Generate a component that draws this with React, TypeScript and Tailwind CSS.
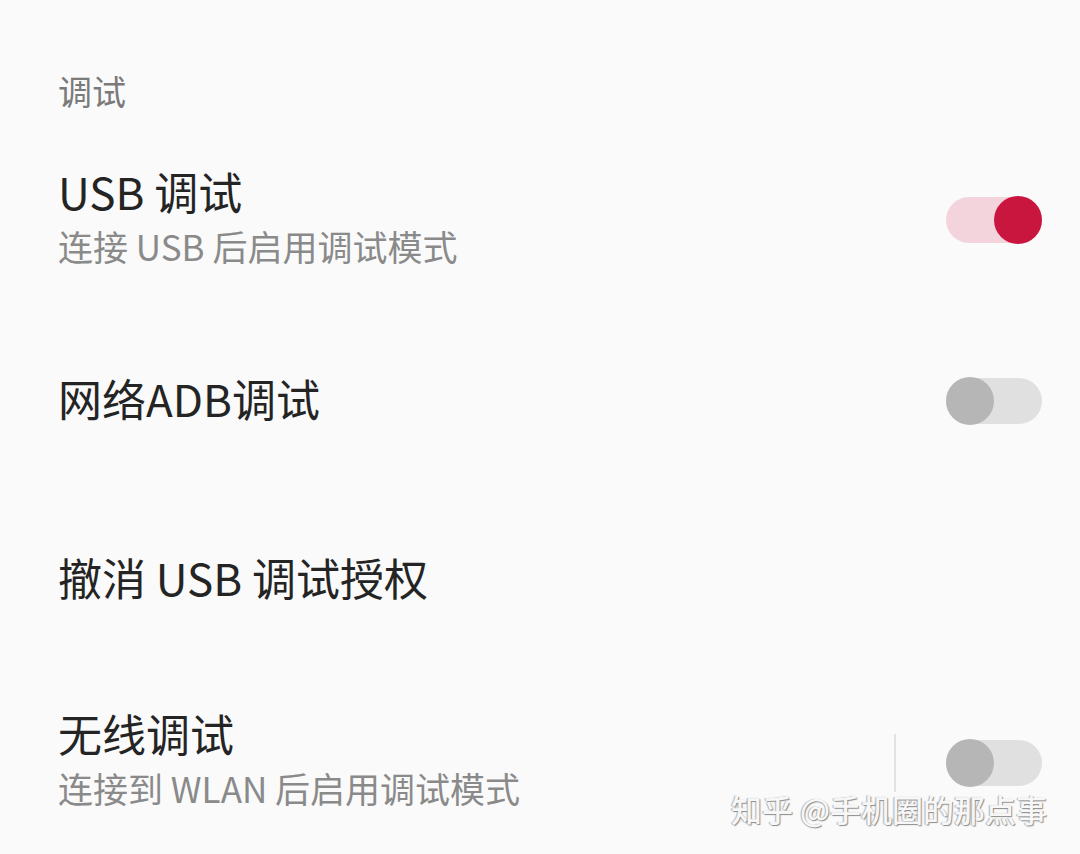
import React from 'react';

interface IToggleProps {
  checked: boolean;
}

const Toggle = ({ checked }: IToggleProps) => (
  <div
    className={`relative flex h-[46px] w-[96px] shrink-0 items-center rounded-full ${
      checked ? 'justify-end bg-[#f3d4dc]' : 'justify-start bg-[#e0e0e0]'
    }`}
  >
    <div
      className={`h-[48px] w-[48px] rounded-full ${checked ? 'bg-[#c9163f]' : 'bg-[#b6b6b6]'}`}
    />
  </div>
);

interface IRowProps {
  title: string;
  summary?: string;
  checked?: boolean;
  divider?: boolean;
  className: string;
}

const Row = ({ title, summary, checked, divider, className }: IRowProps) => (
  <div className={`flex items-center justify-between ${className}`}>
    <div className="flex flex-col">
      <span className="text-[44px] leading-[52px] text-[#242424]">{title}</span>
      {summary && (
        <span className="mt-[5px] text-[35px] leading-[48px] text-[#8a8a8a]">{summary}</span>
      )}
    </div>

    {checked !== undefined && (
      <div className="mt-[6px] flex items-center gap-[50px]">
        {divider && <div className="h-[58px] w-[2px] bg-[#e2e2e2]" />}
        <Toggle checked={checked} />
      </div>
    )}
  </div>
);

export default function App() {
  return (
    <div
      className="relative h-[854px] w-[1080px] overflow-hidden bg-[#fafafa] pl-[58px] pr-[38px]"
      style={{ fontFamily: '"Noto Sans CJK SC", "Noto Sans", sans-serif' }}
    >
      <div className="h-[117px] pt-[69px] text-[34px] leading-[44px] text-[#7a7a7a]">调试</div>

      <Row className="h-[200px]" title="USB 调试" summary="连接 USB 后启用调试模式" checked />
      <Row className="h-[162px]" title="网络ADB调试" checked={false} />
      <Row className="h-[195px]" title="撤消 USB 调试授权" />
      <Row
        className="h-[171px]"
        title="无线调试"
        summary="连接到 WLAN 后启用调试模式"
        checked={false}
        divider
      />

      <div className="absolute left-[731px] top-[789px] text-[31px] leading-[40px] font-medium text-[#f7f7f7] [text-shadow:1px_1px_1px_#8c8c8c,-1px_0_1px_#b0b0b0]">
        知乎 @手机圈的那点事
      </div>
    </div>
  );
}
